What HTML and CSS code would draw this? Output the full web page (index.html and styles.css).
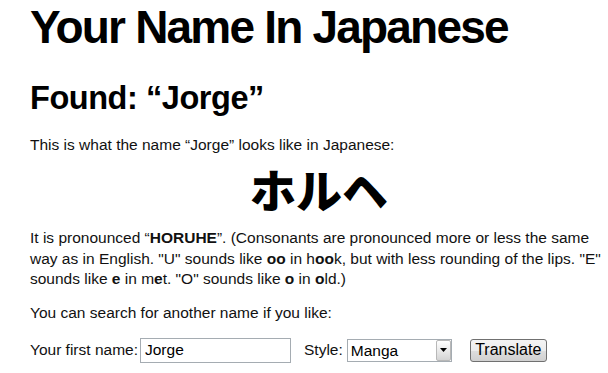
FILE: index.html
```html
<!DOCTYPE html>
<html lang="en">
<head>
<meta charset="utf-8">
<title>Your Name In Japanese</title>
<link rel="stylesheet" href="styles.css">
</head>
<body>
<main class="page">
  <h1 class="title">Your Name In Japanese</h1>
  <h2 class="found">Found: “Jorge”</h2>
  <p class="text intro">This is what the name “Jorge” looks like in Japanese:</p>
  <div class="kana" lang="ja">ホルヘ</div>
  <p class="text pron">It is pronounced “<b>HORUHE</b>”. (Consonants are pronounced more or less the same way as in English. "U" sounds like <b>oo</b> in h<b>oo</b>k, but with less rounding of the lips. "E" sounds like <b>e</b> in m<b>e</b>t. "O" sounds like <b>o</b> in <b>o</b>ld.)</p>
  <p class="text again">You can search for another name if you like:</p>
  <form class="search">
    <label class="field-label" for="name">Your first name:</label>
    <input id="name" class="name-input" type="text" value="Jorge">
    <label class="field-label style-label" for="style">Style:</label>
    <span class="select-wrap">
      <select id="style" class="style-select"><option>Manga</option></select>
      <span class="select-btn"><svg class="arrow" width="7" height="4" viewBox="0 0 7 4"><path d="M0 0H7L3.5 4Z" fill="#000"/></svg></span>
    </span>
    <button type="button" class="translate">Translate</button>
  </form>
</main>
</body>
</html>
```

FILE: styles.css
```css
* {
  box-sizing: border-box;
}

body {
  margin: 0;
  background: #ffffff;
  color: #000000;
  font-family: "Liberation Sans", Arial, sans-serif;
}

.page {
  padding: 1px 0 0 30px;
}

.title {
  margin: 0;
  font-size: 46px;
  line-height: 52px;
  font-weight: bold;
  letter-spacing: -1.8px;
}

.found {
  margin: 26px 0 0;
  font-size: 32.5px;
  line-height: 38px;
  font-weight: bold;
  letter-spacing: -0.45px;
}

.text {
  margin: 0;
  font-size: 15.5px;
  line-height: 20.5px;
  color: #111111;
}

.intro {
  margin-top: 18px;
}

.kana {
  margin-top: 9px;
  text-align: center;
  font-family: "Noto Sans CJK JP", sans-serif;
  font-weight: 900;
  font-size: 46px;
  line-height: 46px;
}

.pron {
  margin-top: 17.5px;
}

.again {
  margin-top: 13.5px;
}

.search {
  margin-top: 14px;
  display: flex;
  align-items: center;
  font-size: 15.5px;
  color: #111111;
}

.name-input {
  margin-left: 2px;
  width: 151px;
  height: 25px;
  border: 1px solid #a5acb2;
  padding: 0 4px;
  font-family: inherit;
  font-size: 15.5px;
  color: #000000;
  background: #ffffff;
  outline: none;
}

.style-label {
  margin-left: 13px;
}

.select-wrap {
  position: relative;
  margin-left: 4px;
  display: inline-block;
  width: 105px;
  height: 23px;
}

.style-select {
  appearance: none;
  -webkit-appearance: none;
  width: 100%;
  height: 100%;
  border: 1px solid #a5acb2;
  border-radius: 0;
  padding: 0 0 0 3px;
  font-family: inherit;
  font-size: 15.5px;
  color: #000000;
  background: #ffffff;
}

.select-btn {
  position: absolute;
  top: 1px;
  right: 1px;
  width: 15px;
  height: 21px;
  display: flex;
  align-items: center;
  justify-content: center;
  border: 1px solid #b8b8b8;
  border-radius: 2px;
  background: linear-gradient(#ffffff, #e6e6e6 60%, #d4d4d4);
  pointer-events: none;
}

.translate {
  margin-left: 18px;
  width: 77px;
  height: 23px;
  padding: 0;
  border: 1px solid #707070;
  border-radius: 3px;
  background: linear-gradient(#f4f4f4 0%, #ececec 50%, #dedede 51%, #d0d0d0 100%);
  font-family: inherit;
  font-size: 16px;
  color: #000000;
}
```
